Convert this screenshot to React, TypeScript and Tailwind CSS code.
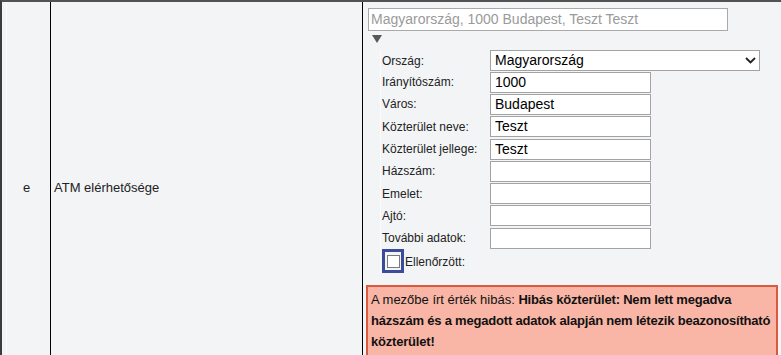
import React from "react";

const fields: { label: string; value: string }[] = [
  { label: "Irányítószám:", value: "1000" },
  { label: "Város:", value: "Budapest" },
  { label: "Közterület neve:", value: "Teszt" },
  { label: "Közterület jellege:", value: "Teszt" },
  { label: "Házszám:", value: "" },
  { label: "Emelet:", value: "" },
  { label: "Ajtó:", value: "" },
  { label: "További adatok:", value: "" },
];

function TextBox({ value }: { value: string }) {
  return (
    <div className="flex h-[21px] w-[161px] items-center border border-[#a3a3a3] bg-white pl-[4px] text-[14px] text-black">
      {value}
    </div>
  );
}

export default function App() {
  return (
    <div
      className="h-[355px] w-[781px] overflow-hidden bg-[#f3f4f6] text-[#222]"
      style={{ fontFamily: '"Liberation Sans", Arial, sans-serif' }}
    >
      <div className="flex border-t-2 border-l-2 border-t-[#525252] border-l-[#3c3c3c]">
        {/* kód oszlop */}
        <div className="flex w-[49px] shrink-0 border-r border-black pl-[4px]">
          <div className="flex flex-1 items-center justify-center border-l border-[#fbfbfc] pr-[4px] text-[13px]">
            e
          </div>
        </div>

        {/* megnevezés */}
        <div className="flex w-[312px] shrink-0 items-center border-r border-black pl-[3px] text-[13px]">
          ATM elérhetősége
        </div>

        {/* cím szerkesztő */}
        <div className="flex-1 pt-[6px] pb-[17px] pl-[5px]">
          <div className="flex h-[23px] w-[360px] items-center border border-[#a9a9a9] bg-white pl-[2px] text-[14px] text-[#9a9a9a]">
            Magyarország, 1000 Budapest, Teszt Teszt
          </div>
          <svg className="mt-[4px] ml-[4px] block" width="10" height="8" viewBox="0 0 10 8">
            <polygon points="0,0 10,0 5,8" fill="#585858" />
          </svg>

          <div className="mt-[7px] ml-[12px] border-l border-[#fbfbfd] pl-[1px]">
            <div className="flex h-[21px] items-center text-[12px]">
              <span className="w-[108px] shrink-0">Ország:</span>
              <div className="flex h-[21px] w-[270px] items-center justify-between border border-[#a3a3a3] bg-white pr-[3px] pl-[4px] text-[14px] text-black">
                Magyarország
                <svg width="11" height="7" viewBox="0 0 11 7">
                  <polyline points="1,1 5.5,5.5 10,1" fill="none" stroke="#222" strokeWidth="1.8" />
                </svg>
              </div>
            </div>
            {fields.map((f) => (
              <div key={f.label} className="flex h-[22.3px] items-center text-[12px]">
                <span className="w-[108px] shrink-0">{f.label}</span>
                <TextBox value={f.value} />
              </div>
            ))}
            <div className="flex h-[24px] items-center text-[12px]">
              <div className="flex h-[24px] w-[22px] items-center justify-center border-[3px] border-[#3d4b9b]">
                <div className="h-[13px] w-[13px] border border-[#7a7a7a] bg-white" />
              </div>
              <span className="mt-[2px] ml-[1px]">Ellenőrzött:</span>
            </div>
          </div>

          <div className="mt-[12px] ml-[-2px] w-[412px] border-2 border-[#d95a3f] bg-[#f9b6a6] px-[3px] pt-[2px] pb-[3px] text-[13px] leading-[21px] text-[#111]">
            A mezőbe írt érték hibás:{" "}
            <b className="tracking-[-0.2px]">
              Hibás közterület: Nem lett megadva házszám és a megadott adatok alapján nem létezik
              beazonosítható közterület!
            </b>
          </div>
        </div>
      </div>
    </div>
  );
}
